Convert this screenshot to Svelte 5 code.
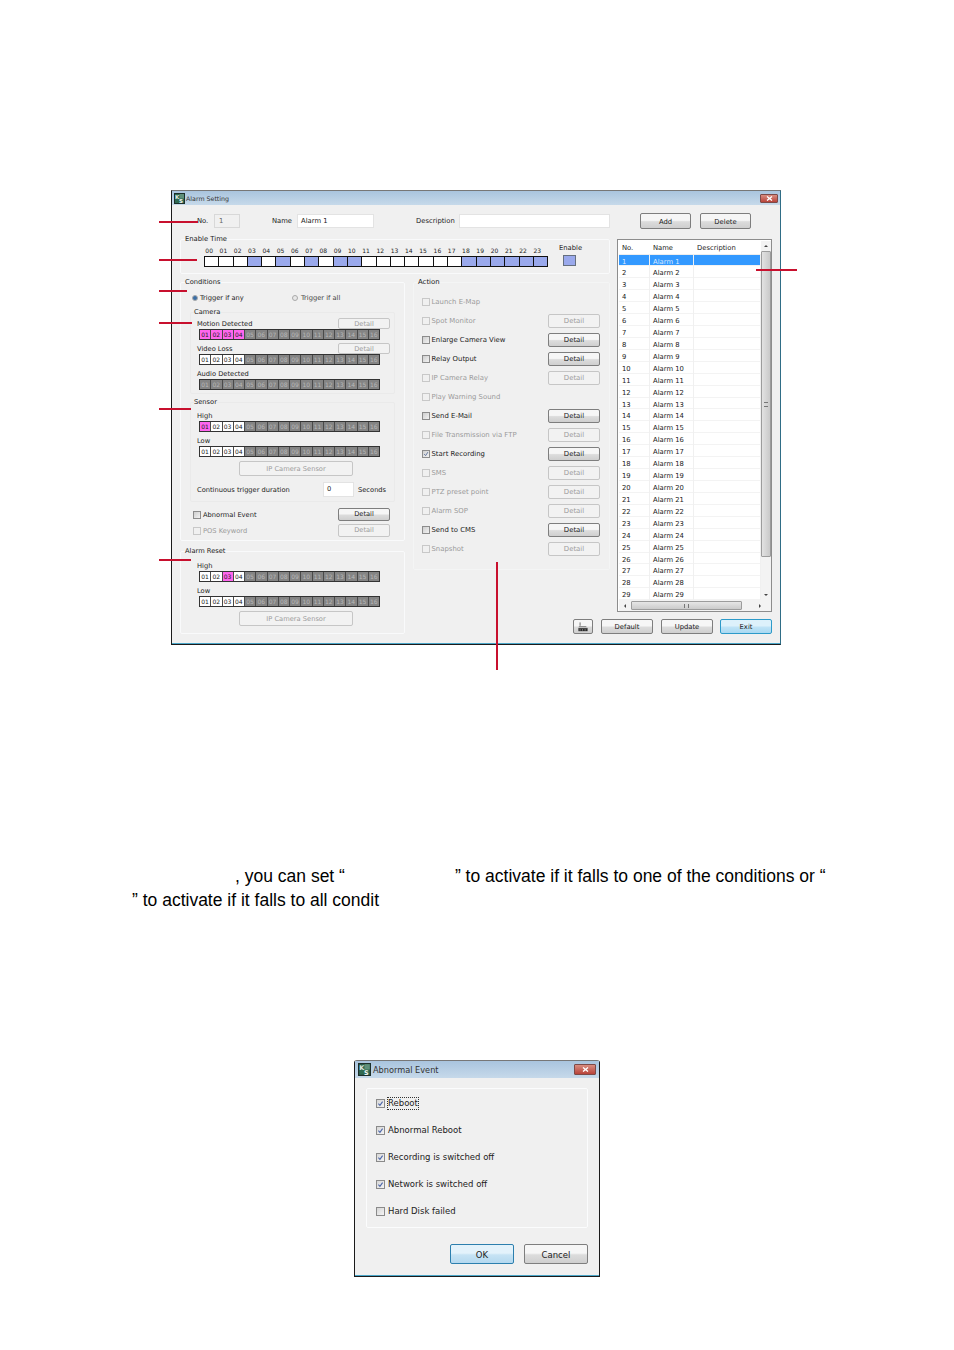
<script>
  const hours = Array.from({ length: 24 }, (_, i) => String(i).padStart(2, "0"));
  const activeHours = [3, 5, 7, 9, 10, 18, 19, 20, 21, 22, 23];
  const channels = Array.from({ length: 16 }, (_, i) => String(i + 1).padStart(2, "0"));

  const actions = [
    { label: "Launch E-Map", on: false, detail: false },
    { label: "Spot Monitor", on: false, detail: true },
    { label: "Enlarge Camera View", on: true, detail: true },
    { label: "Relay Output", on: true, detail: true },
    { label: "IP Camera Relay", on: false, detail: true },
    { label: "Play Warning Sound", on: false, detail: false },
    { label: "Send E-Mail", on: true, detail: true },
    { label: "File Transmission via FTP", on: false, detail: true },
    { label: "Start Recording", on: true, detail: true, checked: true },
    { label: "SMS", on: false, detail: true },
    { label: "PTZ preset point", on: false, detail: true },
    { label: "Alarm SOP", on: false, detail: true },
    { label: "Send to CMS", on: true, detail: true },
    { label: "Snapshot", on: false, detail: true },
  ];

  const alarms = Array.from({ length: 29 }, (_, i) => i + 1);

  const events = [
    { label: "Reboot", checked: true, focus: true },
    { label: "Abnormal Reboot", checked: true },
    { label: "Recording is switched off", checked: true },
    { label: "Network is switched off", checked: true },
    { label: "Hard Disk failed", checked: false },
  ];

  const redLines = [
    { cls: "l1" }, { cls: "l2" }, { cls: "l3" }, { cls: "l4" },
    { cls: "l5" }, { cls: "l6" }, { cls: "l7" }, { cls: "l8" },
  ];
</script>

{#snippet appIcon()}
  <svg class="app-icon" viewBox="0 0 11 11" aria-hidden="true">
    <rect width="11" height="11" fill="#2f6a52" />
    <rect x=".5" y=".5" width="10" height="10" fill="none" stroke="#1c2f2a" />
    <rect x="5.5" y="1" width="4.5" height="4.5" fill="#5f8f7a" />
    <text x="1" y="6" font-size="5.5" font-weight="700" fill="#dfe6e2" font-family="DejaVu Sans, sans-serif">K</text>
    <text x="5" y="10" font-size="5.5" font-weight="700" fill="#f4f7f5" font-family="DejaVu Sans, sans-serif">S</text>
  </svg>
{/snippet}

{#snippet closeBtn()}
  <span class="close">
    <svg viewBox="0 0 8 6" aria-hidden="true"><path d="M1 .5l6 5M7 .5l-6 5" stroke="#fff" stroke-width="1.5" /></svg>
  </span>
{/snippet}

{#snippet strip(enabled, pink)}
  <div class="strip">
    {#each channels as ch, i}
      <span class="ch" class:live={i < enabled} class:pink={pink.includes(i)}>{ch}</span>
    {/each}
  </div>
{/snippet}

{#snippet check(on, checked)}
  <span class="box" class:off={!on}>
    {#if checked}
      <svg viewBox="0 0 8 8" aria-hidden="true"><path d="M1.5 4l2 2.2 3-4.7" fill="none" stroke="#5a6f9a" stroke-width="1.2" /></svg>
    {/if}
  </span>
{/snippet}

<div class="page">
  <section class="win alarm">
    <header class="title">
      {@render appIcon()}
      <span class="title-text">Alarm Setting</span>
      {@render closeBtn()}
    </header>
    <div class="alarm-body">
      <div class="top-row">
        <span class="lbl-no">No.</span>
        <span class="field no-field">1</span>
        <span class="lbl-name">Name</span>
        <span class="field name-field">Alarm 1</span>
        <span class="lbl-desc">Description</span>
        <span class="field desc-field"></span>
        <button class="btn top-btn add">Add</button>
        <button class="btn top-btn">Delete</button>
      </div>

      <div class="main-grid">
        <fieldset class="group enable-time">
          <legend>Enable Time</legend>
          <div class="enable-wrap">
            <div class="hours-col">
              <div class="hour-labels">
                {#each hours as h}<span>{h}</span>{/each}
              </div>
              <div class="hour-grid">
                {#each hours as h, i}
                  <span class="hour" class:sel={activeHours.includes(i)}></span>
                {/each}
              </div>
            </div>
            <div class="enable-col">
              <span class="enable-lbl">Enable</span>
              <span class="enable-swatch"></span>
            </div>
          </div>
        </fieldset>

        <div class="left-col">
          <fieldset class="group conditions">
            <legend>Conditions</legend>
            <div class="trigger-row">
              <span class="radio sel"></span><span class="trig-any">Trigger if any</span>
              <span class="radio"></span><span class="trig-all">Trigger if all</span>
            </div>

            <fieldset class="group sub camera">
              <legend>Camera</legend>
              <div class="label-row first"><span>Motion Detected</span><button class="btn small" disabled>Detail</button></div>
              {@render strip(0, [0, 1, 2, 3])}
              <div class="label-row"><span>Video Loss</span><button class="btn small" disabled>Detail</button></div>
              {@render strip(4, [])}
              <div class="label-row"><span>Audio Detected</span></div>
              {@render strip(0, [])}
            </fieldset>

            <fieldset class="group sub sensor">
              <legend>Sensor</legend>
              <div class="label-row first"><span>High</span></div>
              {@render strip(4, [0])}
              <div class="label-row"><span>Low</span></div>
              {@render strip(4, [])}
              <button class="btn wide" disabled>IP Camera Sensor</button>
              <div class="duration">
                <span class="dur-lbl">Continuous trigger duration</span>
                <span class="field dur-field">0</span>
                <span class="dur-unit">Seconds</span>
              </div>
            </fieldset>

            <div class="extra-row">
              {@render check(true, false)}<span class="extra-lbl">Abnormal Event</span>
              <button class="btn extra-btn">Detail</button>
            </div>
            <div class="extra-row pos">
              {@render check(false, false)}<span class="extra-lbl dim">POS Keyword</span>
              <button class="btn extra-btn" disabled>Detail</button>
            </div>
          </fieldset>

          <fieldset class="group reset">
            <legend>Alarm Reset</legend>
            <div class="reset-inner">
              <div class="label-row first"><span>High</span></div>
              {@render strip(4, [2])}
              <div class="label-row"><span>Low</span></div>
              {@render strip(4, [])}
              <button class="btn wide" disabled>IP Camera Sensor</button>
            </div>
          </fieldset>
        </div>

        <fieldset class="group action">
          <legend>Action</legend>
          {#each actions as a}
            <div class="action-row">
              {@render check(a.on, a.checked)}
              <span class="action-lbl" class:dim={!a.on}>{a.label}</span>
              {#if a.detail}<button class="btn action-btn" disabled={!a.on}>Detail</button>{/if}
            </div>
          {/each}
        </fieldset>

        <div class="list">
          <div class="list-table">
            <div class="list-head">
              <span class="c-no">No.</span><span class="c-name">Name</span><span class="c-desc">Description</span>
            </div>
            {#each alarms as n}
              <div class="list-row" class:current={n === 1}>
                <span class="c-no">{n}</span><span class="c-name">Alarm {n}</span><span class="c-desc"></span>
              </div>
            {/each}
          </div>
          <div class="vscroll">
            <span class="arrow up"></span>
            <span class="v-thumb"><i></i></span>
            <span class="arrow down"></span>
          </div>
          <div class="hscroll">
            <span class="arrow left"></span>
            <span class="h-thumb"><i></i></span>
            <span class="arrow right"></span>
          </div>
        </div>

        <div class="bottom-row">
          <button class="btn print" aria-label="Print">
            <svg viewBox="0 0 12 11" aria-hidden="true">
              <path d="M2.5 0v4" stroke="#555" fill="none" />
              <path d="M1 5h9M.5 7h11" stroke="#777" />
              <rect x=".5" y="7" width="11" height="3.5" fill="#2c2c2c" />
              <path d="M2 9h1M5 9h1M8 9h1" stroke="#ddd" />
            </svg>
          </button>
          <button class="btn foot default">Default</button>
          <button class="btn foot">Update</button>
          <button class="btn foot exit">Exit</button>
        </div>
      </div>
    </div>
  </section>

  <div class="para">
    <p class="line-one">, you can set “<span class="gap-a"></span>” to activate if it falls to one of the conditions or “</p>
    <p class="line-two">” to activate if it falls to all condit</p>
  </div>

  <section class="win event">
    <header class="title event-title">
      {@render appIcon()}
      <span class="title-text">Abnormal Event</span>
      {@render closeBtn()}
    </header>
    <div class="event-body">
      <div class="event-group">
        {#each events as e}
          <div class="event-row">
            <span class="big-box">
              {#if e.checked}
                <svg viewBox="0 0 10 10" aria-hidden="true"><path d="M2 5.2l2.2 2.4L8 2.4" fill="none" stroke="#4a64a8" stroke-width="1.5" /></svg>
              {/if}
            </span>
            <span class="event-lbl" class:focus={e.focus}>{e.label}</span>
          </div>
        {/each}
      </div>
      <div class="event-btns">
        <button class="btn ok">OK</button>
        <button class="btn cancel">Cancel</button>
      </div>
    </div>
  </section>

  {#each redLines as r}
    <span class="red {r.cls}"></span>
  {/each}
</div>

<style>
  :global(body) {
    margin: 0;
    background: #fff;
  }

  .page {
    position: relative;
    width: 954px;
    height: 1350px;
    padding-top: 190px;
    box-sizing: border-box;
    overflow: hidden;
    font-family: "DejaVu Sans", "Liberation Sans", sans-serif;
    font-size: 6.8px;
    color: #222;
  }

  .win {
    box-sizing: border-box;
    background: #f0f0f0;
    border: 1px solid #1b1b1b;
    border-top-color: #777;
    border-right-color: #2f6d86;
    box-shadow: inset 0 -1px 0 #4aa6c8;
  }

  .alarm {
    margin-left: 171px;
    width: 610px;
    height: 455px;
  }

  .title {
    display: flex;
    align-items: center;
    height: 14px;
    padding-left: 2px;
    background: linear-gradient(#a9c4de, #c6d9ea);
  }

  .app-icon {
    width: 11px;
    height: 11px;
    flex: none;
  }

  .title-text {
    margin-left: 1px;
    flex: 1;
    color: #333;
    font-size: 6.3px;
  }

  .event .title-text {
    margin-left: 2px;
    font-size: 8.2px;
  }

  .close {
    display: flex;
    align-items: center;
    justify-content: center;
    width: 18px;
    height: 9px;
    margin-right: 2px;
    border: 1px solid #7d4a48;
    box-sizing: border-box;
    border-radius: 1px;
    background: linear-gradient(#d98d80, #b8433a);
  }

  .close svg {
    width: 7px;
    height: 5px;
  }

  .alarm-body {
    padding: 9px 0 0 8px;
  }

  .top-row {
    display: flex;
    align-items: center;
    height: 14px;
  }

  .lbl-no {
    margin-left: 17px;
    width: 17px;
  }

  .field {
    box-sizing: border-box;
    display: block;
    height: 14px;
    line-height: 13px;
    padding-left: 3px;
    background: #fff;
    border: 1px solid #e3e3e3;
  }

  .no-field {
    width: 26px;
    background: #f0f0f0;
    border-color: #d8d8d8;
    color: #666;
    padding-left: 4px;
  }

  .lbl-name {
    margin-left: 32px;
    width: 25px;
  }

  .name-field {
    width: 77px;
  }

  .lbl-desc {
    margin-left: 42px;
    width: 43px;
  }

  .desc-field {
    width: 151px;
  }

  .btn {
    box-sizing: border-box;
    padding: 0;
    margin: 0;
    display: block;
    font: inherit;
    color: #222;
    border: 1px solid #7e7e7e;
    border-radius: 2px;
    background: linear-gradient(#f6f6f6 0 45%, #dcdcdc 55%, #cfcfcf);
  }

  .btn:disabled {
    color: #9c9c9c;
    border-color: #c6c6c6;
    background: #f2f2f2;
  }

  .top-btn {
    width: 51px;
    height: 16px;
    padding-top: 1px;
  }

  .add {
    margin-left: 30px;
    margin-right: 9px;
  }

  .main-grid {
    display: grid;
    grid-template-columns: 225px 8px 197px 7px 155px;
    grid-template-rows: 43px 335px 22px;
    margin-top: 6px;
  }

  .group {
    box-sizing: border-box;
    margin: 0;
    padding: 0;
    min-width: 0;
    border: 1px solid #f9fafb;
    border-radius: 2px;
  }

  legend {
    margin-left: 4px;
    padding: 0;
    height: 10px;
    line-height: 10px;
  }

  .enable-time {
    grid-column: 1 / 4;
    grid-row: 1;
    height: 40px;
  }

  .enable-wrap {
    display: flex;
    padding-left: 21px;
  }

  .hours-col {
    width: 346px;
  }

  .hour-labels {
    display: flex;
    height: 8px;
    margin: 3px 0 1px;
    line-height: 8px;
  }

  .hour-labels span {
    flex: 0 0 14.28px;
    text-align: center;
    font-size: 6px;
  }

  .hour-grid {
    display: flex;
    margin-left: 2px;
    height: 11px;
    border-top: 1px solid #111;
    border-bottom: 1px solid #111;
    border-left: 1px solid #111;
    box-sizing: border-box;
  }

  .hour {
    flex: 1;
    background: #fff;
    border-right: 1px solid #111;
  }

  .hour.sel {
    background: #9aa9ec;
  }

  .enable-col {
    margin-left: 11px;
    display: flex;
    flex-direction: column;
    height: 22px;
  }

  .enable-lbl {
    height: 12px;
    line-height: 9px;
  }

  .enable-swatch {
    margin-left: 4px;
    box-sizing: border-box;
    width: 13px;
    height: 11px;
    background: #9aa9ec;
    border: 1px solid #66707f;
  }

  .left-col {
    grid-column: 1;
    grid-row: 2 / 4;
    font-size: 6.7px;
  }

  .conditions {
    height: 264px;
  }

  .trigger-row {
    display: flex;
    align-items: center;
    height: 10px;
    margin-top: 6px;
    padding-left: 11px;
  }

  .radio {
    box-sizing: border-box;
    width: 6px;
    height: 6px;
    border-radius: 50%;
    border: 1px solid #aaa;
    background: #e8e8e8;
  }

  .radio.sel {
    background: #3a6ea5;
  }

  .trig-any {
    margin-left: 2px;
    width: 92px;
  }

  .trig-all {
    margin-left: 3px;
    color: #444;
  }

  .sub {
    margin: 4px 9px 0 9px;
    border-color: #eaeaea;
  }

  .camera {
    height: 87px;
  }

  .sensor {
    margin-top: 3px;
    height: 105px;
  }

  .sub legend {
    margin-left: 3px;
  }

  .label-row {
    display: flex;
    align-items: center;
    justify-content: space-between;
    height: 11px;
    margin: 3px 4px 0 6px;
  }

  .label-row.first {
    margin-top: 1px;
  }

  .sensor .label-row.first {
    margin-top: 3px;
  }

  .small {
    width: 52px;
    height: 11px;
    padding-top: 1px;
    line-height: 9px;
  }

  .strip {
    display: flex;
    margin-left: 8px;
    width: 181px;
    height: 11px;
    box-sizing: border-box;
    border: 1px solid #333;
    background: #4a4a4a;
    gap: 1px;
  }

  .ch {
    flex: 1;
    min-width: 0;
    text-align: center;
    font-size: 6px;
    line-height: 9px;
    color: #b8b8b8;
    background: #848484;
  }

  .ch.live {
    background: #fff;
    color: #222;
  }

  .ch.pink {
    background: #ff66ee;
    color: #222;
  }

  .wide {
    width: 114px;
    height: 15px;
    padding-top: 1px;
    margin: 4px 0 0 48px;
  }

  .duration {
    display: flex;
    align-items: center;
    height: 15px;
    margin-top: 6px;
  }

  .dur-lbl {
    margin-left: 6px;
    width: 126px;
  }

  .dur-field {
    width: 31px;
    height: 15px;
  }

  .dur-unit {
    margin-left: 4px;
  }

  .box {
    box-sizing: border-box;
    display: block;
    flex: none;
    width: 8px;
    height: 8px;
    border: 1px solid #8c8c8c;
    background: linear-gradient(135deg, #cfcfcf, #f2f2f2);
  }

  .box.off {
    border-color: #c8c8c8;
    background: #f0f0f0;
  }

  .box svg {
    display: block;
    width: 6px;
    height: 6px;
  }

  .extra-row {
    display: flex;
    align-items: center;
    height: 13px;
    margin-top: 6px;
    padding-left: 12px;
  }

  .extra-row.pos {
    margin-top: 3px;
  }

  .extra-lbl {
    margin-left: 2px;
    width: 135px;
  }

  .dim {
    color: #9a9a9a;
  }

  .extra-btn {
    width: 52px;
    height: 13px;
    line-height: 11px;
  }

  .reset {
    margin-top: 5px;
    height: 88px;
  }

  .reset-inner {
    padding: 3px 0 0 10px;
  }

  .action {
    grid-column: 3;
    grid-row: 2;
    height: 293px;
    padding-top: 5px;
    border-color: #f4f5f5;
    font-size: 6.9px;
  }

  .action-row {
    display: flex;
    align-items: center;
    height: 19.05px;
    padding-left: 8px;
  }

  .action-lbl {
    margin-left: 1.5px;
    width: 116.5px;
  }

  .action-btn {
    width: 52px;
    height: 14px;
  }

  .list {
    grid-column: 5;
    grid-row: 1 / 3;
    position: relative;
    margin-top: 5px;
    box-sizing: border-box;
    height: 373px;
    display: grid;
    grid-template-columns: 142px 10px;
    grid-template-rows: 1fr 11px;
    padding: 1px 0 0 1px;
    border: 1px solid #8d8d8d;
    background: #fff;
  }

  .list-table {
    overflow: hidden;
  }

  .list-head,
  .list-row {
    display: grid;
    grid-template-columns: 30px 44px 1fr;
    padding-left: 1px;
  }

  .list-head {
    height: 13.5px;
    line-height: 15px;
    border-bottom: 1px solid #eee;
    box-sizing: border-box;
  }

  .list-row {
    height: 11.93px;
    line-height: 15px;
    box-sizing: border-box;
    border-bottom: 1px solid #f3f3f3;
  }

  .list-row span {
    border-right: 1px solid #f0f0f0;
  }

  .c-no {
    padding-left: 2px;
  }

  .c-name {
    padding-left: 3px;
  }

  .c-desc {
    padding-left: 3px;
  }

  .list-row.current {
    background: #3399ff;
    color: #dce9ff;
  }

  .vscroll {
    display: flex;
    flex-direction: column;
    align-items: stretch;
    background: #f3f3f3;
  }

  .v-thumb {
    display: flex;
    align-items: center;
    justify-content: center;
    height: 306px;
    box-sizing: border-box;
    border: 1px solid #9c9c9c;
    border-radius: 1px;
    background: linear-gradient(90deg, #e2e2e2, #c9c9c9);
  }

  .v-thumb i {
    width: 4px;
    height: 3px;
    border-top: 1px solid #777;
    border-bottom: 1px solid #777;
  }

  .hscroll {
    grid-column: 1 / 3;
    display: flex;
    align-items: center;
    background: #f3f3f3;
  }

  .h-thumb {
    display: flex;
    align-items: center;
    justify-content: center;
    width: 111px;
    height: 9px;
    margin: 0 auto 0 1px;
    box-sizing: border-box;
    border: 1px solid #9c9c9c;
    border-radius: 1px;
    background: linear-gradient(#e6e6e6, #cbcbcb);
  }

  .h-thumb i {
    width: 3px;
    height: 4px;
    border-left: 1px solid #777;
    border-right: 1px solid #777;
  }

  .arrow {
    flex: none;
    width: 0;
    height: 0;
    border: 2px solid transparent;
    margin: 4px auto;
  }

  .arrow.up {
    border-bottom-color: #444;
    border-top-width: 0;
  }

  .arrow.down {
    border-top-color: #444;
    border-bottom-width: 0;
    margin-top: auto;
  }

  .arrow.left {
    border-right-color: #444;
    border-left-width: 0;
    margin: 0 4px 0 5px;
  }

  .arrow.right {
    border-left-color: #444;
    border-right-width: 0;
    margin: 0 10px 0 0;
  }

  .bottom-row {
    grid-column: 3 / 6;
    grid-row: 3;
    display: flex;
    justify-content: flex-end;
    gap: 8px;
    margin-top: 7px;
    height: 15px;
  }

  .foot {
    width: 52px;
    height: 15px;
  }

  .print {
    width: 20px;
    height: 15px;
    display: flex;
    align-items: center;
    justify-content: center;
  }

  .print svg {
    width: 10px;
    height: 10px;
  }

  .exit {
    margin-left: -1px;
    border-color: #2c9ac9;
    background: linear-gradient(#ddf1fb 0 45%, #bfe3f6 55%, #a9d9f2);
  }

  .para {
    margin-top: 219px;
    font-family: "Liberation Sans", Arial, sans-serif;
    font-size: 17.5px;
    line-height: 24px;
    color: #000;
  }

  .para p {
    margin: 0;
    white-space: nowrap;
  }

  .line-one {
    padding-left: 235px;
  }

  .gap-a {
    display: inline-block;
    width: 110px;
  }

  .line-two {
    padding-left: 132px;
  }

  .event {
    margin: 148px 0 0 354px;
    width: 246px;
    height: 217px;
    font-size: 8.5px;
    border-right-color: #1b1b1b;
    border-radius: 3px 3px 0 0;
  }

  .event-title {
    height: 17px;
  }

  .event-title .close {
    height: 11px;
    width: 22px;
    margin-right: 3px;
  }

  .event-title .app-icon {
    width: 13px;
    height: 13px;
    margin-left: 1px;
  }

  .event-body {
    padding: 10px 11px 0 11px;
  }

  .event-group {
    box-sizing: border-box;
    height: 140px;
    padding-top: 1px;
    border: 1px solid #fbfcfd;
    border-radius: 2px;
  }

  .event-row {
    display: flex;
    align-items: center;
    height: 27px;
    padding-left: 9px;
  }

  .big-box {
    box-sizing: border-box;
    display: block;
    width: 9px;
    height: 9px;
    border: 1px solid #8a8a8a;
    background: linear-gradient(135deg, #d6d6d6, #f4f4f4);
  }

  .big-box svg {
    display: block;
    width: 7px;
    height: 7px;
  }

  .event-lbl {
    margin-left: 2px;
    line-height: 11px;
    border: 1px solid transparent;
  }

  .event-lbl.focus {
    border: 1px dotted #333;
  }

  .event-btns {
    display: flex;
    justify-content: flex-end;
    gap: 10px;
    margin-top: 16px;
  }

  .ok,
  .cancel {
    width: 64px;
    height: 20px;
    padding-top: 1px;
  }

  .ok {
    border-color: #2c7fae;
    background: linear-gradient(#e3f2fb 0 45%, #c6e3f4 55%, #b4d8ef);
  }

  .red {
    position: absolute;
    background: #c8102e;
    height: 2px;
    left: 159px;
  }

  .l1 { top: 221px; width: 39px; }
  .l2 { top: 259px; width: 38px; }
  .l3 { top: 290px; width: 28px; }
  .l4 { top: 322px; width: 33px; }
  .l5 { top: 408px; width: 32px; }
  .l6 { top: 559px; width: 32px; }
  .l7 { top: 269px; left: 756px; width: 41px; }
  .l8 { top: 562px; left: 496px; width: 2px; height: 108px; }
</style>
